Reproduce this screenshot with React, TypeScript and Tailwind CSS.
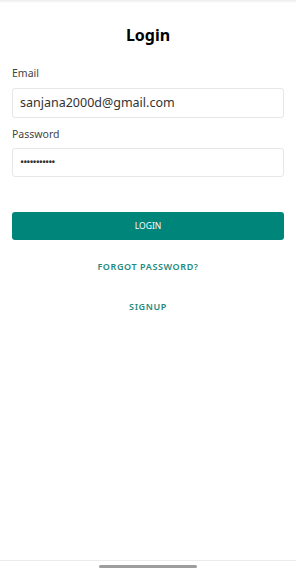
export default function App() {
  return (
    <div
      className="relative flex h-[573px] w-[296px] flex-col bg-white"
      style={{ fontFamily: '"Noto Sans", "Open Sans", sans-serif' }}
    >
      {/* top shadow */}
      <div className="h-[3px] w-full bg-gradient-to-b from-[#ececec] to-white" />

      <h1 className="mt-[20px] text-center text-[16px] font-bold leading-[24px] text-black">Login</h1>

      <div className="mt-[19px] flex flex-col px-[12px]">
        <label className="text-[10.5px] leading-[14px] text-[#444]">Email</label>
        <div className="mt-[8px] flex h-[30px] items-center rounded-[3px] border border-[#e6e6e6] px-[7px] text-[12.5px] text-[#333]">
          sanjana2000d@gmail.com
        </div>

        <label className="mt-[9px] text-[10.5px] leading-[14px] text-[#444]">Password</label>
        <div className="mt-[7px] flex h-[29px] items-center rounded-[3px] border border-[#e6e6e6] px-[7px] text-[11px] tracking-[-1px] text-[#333]">
          •••••••••••
        </div>

        <button className="mt-[35px] flex h-[28px] items-center justify-center rounded-[3px] bg-[#00857a] text-[8.5px] text-white">
          LOGIN
        </button>

        <button className="mt-[20px] text-center text-[9px] font-semibold tracking-[0.6px] text-[#1f8a7e]">
          FORGOT PASSWORD?
        </button>

        <button className="mt-[26px] text-center text-[9px] font-semibold tracking-[0.6px] text-[#1f8a7e]">
          SIGNUP
        </button>
      </div>

      <div className="mt-auto border-t border-[#ececec] pb-[5px] pt-[4px]">
        <div className="mx-auto h-[3px] w-[98px] rounded-full bg-[#9e9e9e]" />
      </div>
    </div>
  );
}
